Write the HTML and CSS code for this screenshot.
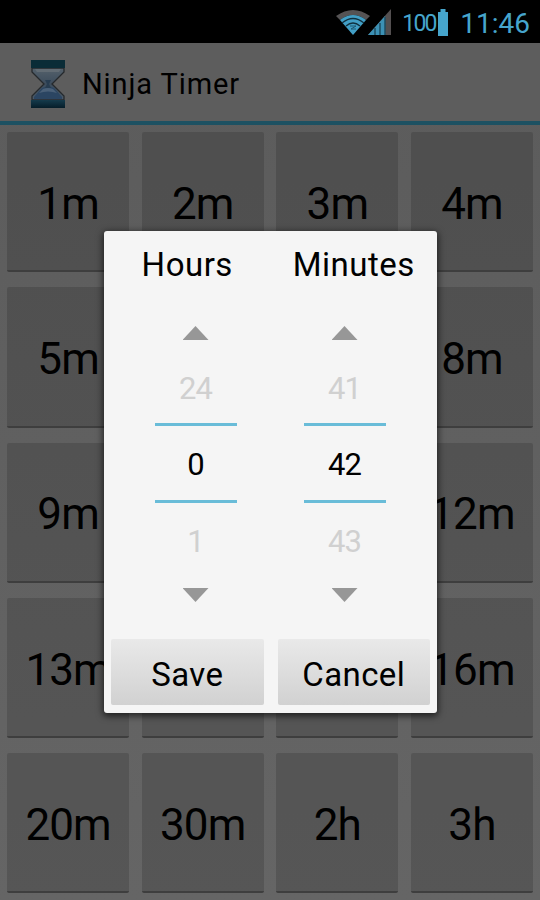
FILE: index.html
```html
<!DOCTYPE html>
<html lang="en">
<head>
    <meta charset="UTF-8">
    <meta name="viewport" content="width=device-width, initial-scale=1.0">
    <title>Ninja Timer</title>
    <link rel="stylesheet" href="styles.css">
</head>
<body>
    <div class="status-bar">
        <svg class="wifi" width="34" height="25" viewBox="0 0 34 25">
            <path d="M0 6 Q17 -6 34 6 L30 10 Q17 0 4 10 Z" fill="#555354"/>
            <path d="M4 10 Q17 0 30 10 L17 25 Z" fill="#429fc6"/>
            <path d="M6 13 Q17 4 28 13 M10 16 Q17 10 24 16" fill="none" stroke="#10303f" stroke-width="1.3"/>
            <path d="M14 16 H20 L15 19 H20" fill="none" stroke="#1d5872" stroke-width="1"/>
        </svg>
        <svg class="signal" width="23" height="26" viewBox="0 0 23 26">
            <path d="M0 26 L23 0 V26 Z" fill="#534f50"/>
            <path d="M0 26 L17 7 V26 Z" fill="#3c91b5"/>
            <path d="M7 19 V26 M12 14 V26 M17 8 V26" stroke="#1e4d61" stroke-width="1.5"/>
        </svg>
        <span class="percent">100</span>
        <svg class="battery" width="10" height="27" viewBox="0 0 10 27">
            <path d="M2.5 0 H7.5 V3 H10 V27 H0 V3 H2.5 Z" fill="#46a5cc"/>
        </svg>
        <span class="clock">11:46</span>
    </div>

    <header>
        <svg class="logo" width="36" height="48" viewBox="0 0 36 48">
            <defs>
                <linearGradient id="sand" x1="0" y1="0" x2="0" y2="1">
                    <stop offset="0" stop-color="#55616b"/>
                    <stop offset="0.5" stop-color="#3c4c5c"/>
                    <stop offset="1" stop-color="#4c5a68"/>
                </linearGradient>
                <linearGradient id="cap" x1="0" y1="0" x2="0" y2="1">
                    <stop offset="0" stop-color="#153b4c"/>
                    <stop offset="1" stop-color="#061d29"/>
                </linearGradient>
            </defs>
            <path d="M2 8 H34 V12 L22 24 L34 36 V40 H2 V36 L14 24 L2 12 Z" fill="url(#sand)" stroke="#25292c" stroke-width="1.3"/>
            <path d="M5 9 H31 L29 12 H7 Z" fill="#626c74"/>
            <path d="M12 28 Q18 25 24 28 L32 37 V39 H4 V37 Z" fill="#2b4562"/>
            <path d="M13 29 Q18 27 23 29 L27 33 Q18 30 9 33 Z" fill="#4a6078"/>
            <path d="M15 20 H21 L19 24 L21 28 H15 L17 24 Z" fill="#273c50"/>
            <rect x="1" y="0" width="34" height="8" fill="#0a2c37"/>
            <rect x="1" y="40" width="34" height="8" fill="url(#cap)"/>
        </svg>
        <h1>Ninja Timer</h1>
    </header>

    <div class="grid">
        <div class="timer">1m</div>
        <div class="timer">2m</div>
        <div class="timer">3m</div>
        <div class="timer">4m</div>
        <div class="timer">5m</div>
        <div class="timer">6m</div>
        <div class="timer">7m</div>
        <div class="timer">8m</div>
        <div class="timer">9m</div>
        <div class="timer">10m</div>
        <div class="timer">11m</div>
        <div class="timer">12m</div>
        <div class="timer">13m</div>
        <div class="timer">14m</div>
        <div class="timer">15m</div>
        <div class="timer">16m</div>
        <div class="timer">20m</div>
        <div class="timer">30m</div>
        <div class="timer">2h</div>
        <div class="timer">3h</div>
    </div>

    <div class="dialog">
        <div class="titles">
            <span>Hours</span>
            <span>Minutes</span>
        </div>
        <div class="pickers">
            <div class="picker">
                <div class="arrow up"></div>
                <div class="faded">24</div>
                <div class="value">0</div>
                <div class="faded">1</div>
                <div class="arrow down"></div>
            </div>
            <div class="picker">
                <div class="arrow up"></div>
                <div class="faded">41</div>
                <div class="value">42</div>
                <div class="faded">43</div>
                <div class="arrow down"></div>
            </div>
        </div>
        <div class="buttons">
            <button>Save</button>
            <button>Cancel</button>
        </div>
    </div>
</body>
</html>
```
FILE: styles.css
```css
* {
    box-sizing: border-box;
}

body {
    margin: 0;
    height: 900px;
    overflow: hidden;
    position: relative;
    font-family: Roboto, sans-serif;
    background: linear-gradient(#5b5b5b, #656565);
    color: #000;
}

.status-bar {
    height: 43px;
    padding: 1px 10px 0 0;
    background-color: #000;
    color: #46a5cc;
    display: flex;
    justify-content: flex-end;
    align-items: center;
}

.signal {
    margin-left: -2px;
}

.percent {
    width: 35px;
    margin-left: 11px;
    padding-top: 2px;
    font-size: 23px;
    line-height: 27px;
    letter-spacing: -1.8px;
}

.battery {
    margin: 0 12px 0 1px;
}

.clock {
    padding-top: 3px;
    font-size: 28px;
    line-height: 30px;
}

header {
    height: 82px;
    padding: 0 30px;
    display: flex;
    align-items: center;
    border-bottom: 4px solid #1d5162;
    background-color: #5d5d5d;
}

.logo {
    margin-top: 3px;
}

h1 {
    margin: 4px 0 0 16px;
    font-size: 29px;
    font-weight: normal;
    letter-spacing: 0.9px;
}

.grid {
    padding: 7px 7px 0;
    display: grid;
    grid-template-columns: repeat(4, 1fr);
    grid-auto-rows: 140.3px;
    gap: 15px 12.5px;
}

.timer {
    display: flex;
    justify-content: center;
    align-items: center;
    padding-top: 5px;
    background-color: rgba(0, 0, 0, 0.14);
    border-bottom: 2px solid #3e3e3e;
    border-radius: 2px;
    font-size: 44px;
    letter-spacing: -0.9px;
}

.dialog {
    position: absolute;
    left: 104px;
    top: 231px;
    width: 333px;
    height: 482px;
    display: flex;
    flex-direction: column;
    background-color: #f5f5f5;
    border-radius: 3px;
    box-shadow: 0 2px 7px 1px rgba(0, 0, 0, 0.65);
}

.titles {
    height: 68px;
    display: grid;
    grid-template-columns: 1fr 1fr;
    text-align: center;
    font-size: 33px;
    line-height: 68px;
    letter-spacing: 0.5px;
}

.pickers {
    flex: 1;
    display: flex;
    justify-content: center;
    gap: 67px;
    padding: 27px 1px 0 0;
}

.picker {
    width: 82px;
    display: flex;
    flex-direction: column;
    align-items: center;
    font-size: 31px;
    letter-spacing: -1px;
}

.arrow {
    width: 26px;
    height: 14px;
    background-color: #979797;
}

.up {
    clip-path: polygon(50% 0, 100% 100%, 0 100%);
}

.down {
    clip-path: polygon(0 0, 100% 0, 50% 100%);
}

.faded {
    height: 83px;
    line-height: 97px;
    color: #d0d0d0;
}

.value {
    width: 82px;
    height: 80px;
    line-height: 78px;
    border-top: 3px solid #69bcd8;
    border-bottom: 3px solid #69bcd8;
    text-align: center;
}

.value + .faded {
    height: 85px;
    line-height: 78px;
}

.buttons {
    display: flex;
    gap: 14px;
    padding: 0 7px 8px;
}

button {
    flex: 1;
    height: 66px;
    padding: 4px 0 0;
    border: none;
    border-radius: 2px;
    background: linear-gradient(#e9e9e9, #d1d1d1);
    font-family: inherit;
    font-size: 33px;
    letter-spacing: 0.4px;
    color: #000;
}
```
